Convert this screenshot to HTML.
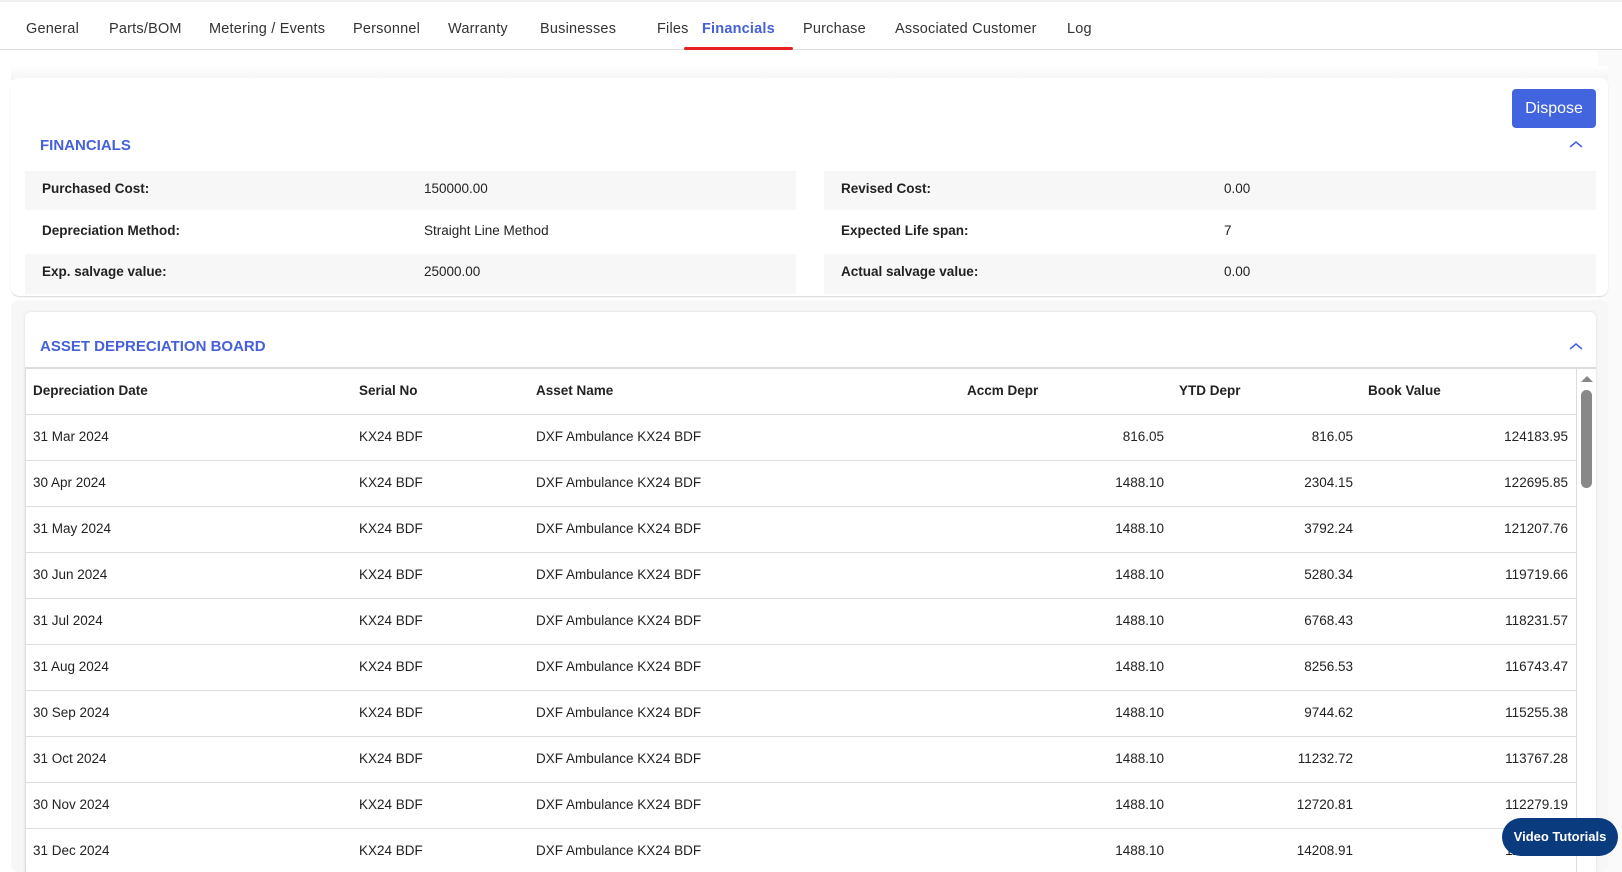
<!DOCTYPE html>
<html><head><style>
*{margin:0;padding:0;box-sizing:border-box}
body{width:1622px;height:872px;overflow:hidden;background:#fff;font-family:"Liberation Sans",sans-serif;color:#222;font-size:13.5px;position:relative}
.a{position:absolute;white-space:nowrap}
.tab{position:absolute;top:21px;font-size:14.5px;color:#333;letter-spacing:0.2px}
.b{font-weight:bold}
.blue{color:#4560d8}
.num{text-align:right}
</style></head><body>
<div class="a" style="left:0;top:0;width:1622px;height:2px;background:#f0f0f0"></div>
<div class="tab" style="left:26px">General</div>
<div class="tab" style="left:109px">Parts/BOM</div>
<div class="tab" style="left:209px">Metering / Events</div>
<div class="tab" style="left:353px">Personnel</div>
<div class="tab" style="left:448px">Warranty</div>
<div class="tab" style="left:540px">Businesses</div>
<div class="tab" style="left:657px">Files</div>
<div class="tab b" style="left:702px;color:#4560d8">Financials</div>
<div class="tab" style="left:803px">Purchase</div>
<div class="tab" style="left:895px">Associated Customer</div>
<div class="tab" style="left:1067px">Log</div>
<div class="a" style="left:0;top:49px;width:1622px;height:1px;background:#ddd"></div>
<div class="a" style="left:684px;top:47px;width:109px;height:3px;background:#e52222;border-radius:2px"></div>
<div class="a" style="left:1598px;top:50px;width:24px;height:822px;background:#fafafa"></div>
<div class="a" style="left:11px;top:66px;width:1597px;height:14px;background:linear-gradient(#fff,#f4f4f4)"></div>
<div class="a" style="left:11px;top:78px;width:1597px;height:218px;background:#fff;border-radius:8px;box-shadow:0 1px 1px #d8d8d8"></div>
<div class="a" style="left:1512px;top:89px;width:84px;height:39px;background:#4264de;border-radius:4px;color:#fff;font-size:16px;text-align:center;line-height:39px">Dispose</div>
<div class="a b blue" style="left:40px;top:137px;font-size:15px">FINANCIALS</div>
<svg class="a" style="left:1569px;top:140px" width="14" height="9"><path d="M1 7 L7 2 L13 7" stroke="#4560d8" stroke-width="1.5" fill="none"/></svg>
<div class="a" style="left:25px;top:171px;width:771px;height:39px;background:#f7f7f7"></div>
<div class="a" style="left:824px;top:171px;width:772px;height:39px;background:#f7f7f7"></div>
<div class="a" style="left:25px;top:254px;width:771px;height:40px;background:#f7f7f7"></div>
<div class="a" style="left:824px;top:254px;width:772px;height:40px;background:#f7f7f7"></div>
<div class="a b" style="left:42px;top:181px">Purchased Cost:</div>
<div class="a" style="left:424px;top:181px">150000.00</div>
<div class="a b" style="left:841px;top:181px">Revised Cost:</div>
<div class="a" style="left:1224px;top:181px">0.00</div>
<div class="a b" style="left:42px;top:223px">Depreciation Method:</div>
<div class="a" style="left:424px;top:223px">Straight Line Method</div>
<div class="a b" style="left:841px;top:223px">Expected Life span:</div>
<div class="a" style="left:1224px;top:223px">7</div>
<div class="a b" style="left:42px;top:264px">Exp. salvage value:</div>
<div class="a" style="left:424px;top:264px">25000.00</div>
<div class="a b" style="left:841px;top:264px">Actual salvage value:</div>
<div class="a" style="left:1224px;top:264px">0.00</div>
<div class="a" style="left:11px;top:300px;width:1597px;height:572px;background:#f7f7f7;border-radius:8px"></div>
<div class="a" style="left:25px;top:312px;width:1571px;height:560px;background:#fff;border-radius:6px 6px 0 0;box-shadow:0 0 3px #ddd"></div>
<div class="a b blue" style="left:40px;top:338px;font-size:15px">ASSET DEPRECIATION BOARD</div>
<svg class="a" style="left:1569px;top:342px" width="14" height="9"><path d="M1 7 L7 2 L13 7" stroke="#4560d8" stroke-width="1.5" fill="none"/></svg>
<div class="a" style="left:25px;top:367px;width:1571px;height:2px;background:#ddd"></div>
<div class="a" style="left:25px;top:369px;width:1px;height:503px;background:#ddd"></div>
<div class="a" style="left:1576px;top:369px;width:1px;height:503px;background:#ddd"></div>
<svg class="a" style="left:1580px;top:375px" width="14" height="8"><path d="M1 7 L7 1 L13 7Z" fill="#888"/></svg>
<div class="a" style="left:1581px;top:390px;width:11px;height:98px;background:#888;border-radius:6px"></div>
<div class="a b" style="left:33px;top:383px">Depreciation Date</div>
<div class="a b" style="left:359px;top:383px">Serial No</div>
<div class="a b" style="left:536px;top:383px">Asset Name</div>
<div class="a b" style="left:967px;top:383px">Accm Depr</div>
<div class="a b" style="left:1179px;top:383px">YTD Depr</div>
<div class="a b" style="left:1368px;top:383px">Book Value</div>
<div id="rows"></div>
<script>
var d=[["31 Mar 2024","816.05","816.05","124183.95"],["30 Apr 2024","1488.10","2304.15","122695.85"],["31 May 2024","1488.10","3792.24","121207.76"],["30 Jun 2024","1488.10","5280.34","119719.66"],["31 Jul 2024","1488.10","6768.43","118231.57"],["31 Aug 2024","1488.10","8256.53","116743.47"],["30 Sep 2024","1488.10","9744.62","115255.38"],["31 Oct 2024","1488.10","11232.72","113767.28"],["30 Nov 2024","1488.10","12720.81","112279.19"],["31 Dec 2024","1488.10","14208.91","110791.09"]];
var h="";d.forEach(function(r,i){var y=415+i*46;
h+='<div class="a" style="left:26px;top:'+(y-1)+'px;width:1550px;height:1px;background:#ddd"></div>';
var t=y+14;
h+='<div class="a" style="left:33px;top:'+t+'px">'+r[0]+'</div>';
h+='<div class="a" style="left:359px;top:'+t+'px">KX24 BDF</div>';
h+='<div class="a" style="left:536px;top:'+t+'px">DXF Ambulance KX24 BDF</div>';
h+='<div class="a num" style="left:1000px;width:164px;top:'+t+'px">'+r[1]+'</div>';
h+='<div class="a num" style="left:1200px;width:153px;top:'+t+'px">'+r[2]+'</div>';
h+='<div class="a num" style="left:1400px;width:168px;top:'+t+'px">'+r[3]+'</div>';});
document.getElementById("rows").innerHTML=h;
</script>
<div class="a b" style="left:1502px;top:818px;width:116px;height:38px;background:#0a3b7e;color:#fff;border-radius:19px;text-align:center;line-height:38px;font-size:13px">Video Tutorials</div>
</body></html>
